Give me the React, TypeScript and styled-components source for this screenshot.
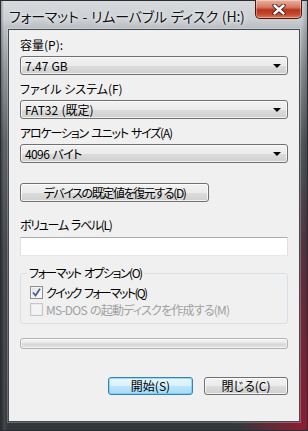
import React from "react";
import styled, { createGlobalStyle } from "styled-components";

const Global = createGlobalStyle`
  html, body { margin: 0; padding: 0; background: #2b2f33; }
  body { font-family: "Noto Sans CJK JP", "Liberation Sans", sans-serif; }
  * { box-sizing: border-box; }
`;

const FONT = `"Noto Sans CJK JP", "Liberation Sans", sans-serif`;

const Window = styled.div`
  width: 308px;
  height: 431px;
  display: flex;
  flex-direction: column;
  padding: 0 7px 8px 7px;
  border: 1px solid #2a2d31;
  background:
    radial-gradient(ellipse 70px 260px at 100% 100%, rgba(160, 24, 48, 0.85), rgba(160, 24, 48, 0) 100%),
    linear-gradient(90deg, rgba(0,0,0,0.25) 0px, rgba(255,255,255,0.08) 3px, rgba(0,0,0,0) 7px, rgba(0,0,0,0) 300px, rgba(0,0,0,0.25) 308px),
    linear-gradient(180deg, #d7dadd 0px, #cbcfd3 18px, #b4b9be 30px, #8a8f94 70px, #555a5f 140px, #3c4045 250px, #33373b 431px);
`;

const TitleBar = styled.div`
  height: 28px;
  display: flex;
  align-items: flex-start;
  justify-content: space-between;
  margin-right: -2px;
`;

const TitleText = styled.div`
  font-family: ${FONT};
  font-feature-settings: "palt";
  font-size: 14px;
  letter-spacing: -0.2px;
  word-spacing: 1px;
  line-height: 16px;
  padding: 7px 0 0 1px;
  color: #111;
  text-shadow: 0 0 6px rgba(255,255,255,0.95), 0 0 2px rgba(255,255,255,0.9);
  white-space: nowrap;
`;

const CloseButton = styled.div`
  width: 47px;
  height: 19px;
  margin-top: -1px;
  border: 1px solid #4a1810;
  border-top: none;
  border-radius: 0 0 5px 5px;
  background: linear-gradient(180deg, #e9b2a2 0%, #d77a61 40%, #b9331c 55%, #c44a2c 80%, #e07a55 100%);
  box-shadow: inset 0 0 0 1px rgba(255,255,255,0.35);
  display: flex;
  align-items: center;
  justify-content: center;
`;

const Client = styled.div`
  flex: 1;
  background: #f0f0f0;
  border: 1px solid #454a4f;
  box-shadow: 0 0 0 1px rgba(255,255,255,0.25);
  padding: 7px 11px 0 11px;
  display: flex;
  flex-direction: column;
  font-family: ${FONT};
  font-feature-settings: "palt";
  font-size: 12px;
  color: #000;
`;

const Text = styled.span<{ $ls?: number }>`
  letter-spacing: ${(p) => p.$ls ?? 0}px;
  word-spacing: ${(p) => -(p.$ls ?? 0) + 0.5}px;
  white-space: nowrap;
`;

const Label = styled.div<{ $mt: number }>`
  margin-top: ${(p) => p.$mt}px;
  line-height: 16px;
  height: 16px;
  white-space: nowrap;
`;

const Combo = styled.div`
  margin-top: 3px;
  height: 19px;
  border: 1px solid #707070;
  border-radius: 3px;
  background: linear-gradient(180deg, #f2f2f2 0%, #ebebeb 50%, #dddddd 51%, #cfcfcf 100%);
  box-shadow: inset 0 0 0 1px rgba(255,255,255,0.7);
  display: flex;
  align-items: center;
  justify-content: space-between;
  padding: 0 4px 0 4px;
  line-height: 17px;
`;

const Arrow = styled.span`
  width: 0;
  height: 0;
  border-left: 4px solid transparent;
  border-right: 4px solid transparent;
  border-top: 4px solid #000;
  margin-right: 2px;
  margin-top: 1px;
`;

const Button = styled.div<{ $w: number; $h: number; $default?: boolean }>`
  width: ${(p) => p.$w}px;
  height: ${(p) => p.$h}px;
  border: 1px solid ${(p) => (p.$default ? "#3c7fb1" : "#707070")};
  border-radius: 3px;
  background: ${(p) =>
    p.$default
      ? "linear-gradient(180deg, #eaf6fd 0%, #d9f0fc 50%, #bee6fd 51%, #a7d9f5 100%)"
      : "linear-gradient(180deg, #f2f2f2 0%, #ebebeb 50%, #dddddd 51%, #cfcfcf 100%)"};
  box-shadow: inset 0 0 0 1px ${(p) => (p.$default ? "rgba(72,208,255,0.6)" : "rgba(255,255,255,0.75)")};
  display: flex;
  align-items: center;
  justify-content: center;
  line-height: 16px;
  white-space: nowrap;
`;

const RestoreRow = styled.div`
  margin-top: 20px;
  display: flex;
`;

const TextBox = styled.div`
  margin-top: 4px;
  height: 19px;
  background: #fff;
  border: 1px solid #e3e9ef;
  border-top-color: #abadb3;
  border-left-color: #dbdfe6;
  border-right-color: #dbdfe6;
`;

const Group = styled.fieldset`
  margin: 10px 0 0 0;
  min-width: 0;
  border: 1px solid #d5dfe5;
  border-radius: 3px;
  padding: 0 8px 5px 9px;
  display: flex;
  flex-direction: column;
`;

const Legend = styled.legend`
  padding: 0 2px;
  margin-left: -3px;
  line-height: 14px;
  font-size: 12px;
  white-space: nowrap;
`;

const CheckRow = styled.div<{ $disabled?: boolean; $first?: boolean }>`
  height: 17px;
  margin-top: ${(p) => (p.$first ? 4 : 0)}px;
  display: flex;
  align-items: center;
  gap: 3px;
  color: ${(p) => (p.$disabled ? "#a0a0a0" : "#000")};
  white-space: nowrap;
`;

const Box = styled.span<{ $disabled?: boolean }>`
  width: 13px;
  height: 13px;
  flex: none;
  border: 1px solid ${(p) => (p.$disabled ? "#c6c6c6" : "#8e8f8f")};
  background: ${(p) =>
    p.$disabled
      ? "#f4f4f4"
      : "linear-gradient(135deg, #dcdcdc 0%, #f6f6f6 60%, #ffffff 100%)"};
  box-shadow: inset 0 0 0 1px ${(p) => (p.$disabled ? "#ececec" : "#f4f4f4")};
  display: flex;
  align-items: center;
  justify-content: center;
`;

const Progress = styled.div`
  margin-top: 14px;
  height: 11px;
  border: 1px solid #b2b2b2;
  border-radius: 3px;
  background: linear-gradient(180deg, #f6f6f6 0%, #e6e6e6 45%, #d6d6d6 55%, #e4e4e4 100%);
  box-shadow: inset 0 0 0 1px rgba(255,255,255,0.6);
`;

const ButtonRow = styled.div`
  margin-top: 28px;
  display: flex;
  justify-content: flex-end;
  gap: 11px;
`;

export default function App() {
  return (
    <>
      <Global />
      <Window>
        <TitleBar>
          <TitleText>フォーマット - リムーバブル ディスク (H:)</TitleText>
          <CloseButton>
            <svg width="14" height="11" viewBox="0 0 14 11">
              <path d="M2.5 1.5 L11.5 9.5 M11.5 1.5 L2.5 9.5" stroke="#3a1a14" strokeWidth="4.2" strokeLinecap="round" />
              <path d="M2.5 1.5 L11.5 9.5 M11.5 1.5 L2.5 9.5" stroke="#ffffff" strokeWidth="2.4" strokeLinecap="round" />
            </svg>
          </CloseButton>
        </TitleBar>
        <Client>
          <Label $mt={0}>容量(P):</Label>
          <Combo>
            <Text>7.47 GB</Text>
            <Arrow />
          </Combo>
          <Label $mt={6}>ファイル システム(F)</Label>
          <Combo>
            <Text>FAT32 (既定)</Text>
            <Arrow />
          </Combo>
          <Label $mt={6}>
            <Text $ls={-1.2}>アロケーション ユニット サイズ(A)</Text>
          </Label>
          <Combo>
            <Text $ls={-0.6}>4096 バイト</Text>
            <Arrow />
          </Combo>
          <RestoreRow>
            <Button $w={189} $h={19}>
              <Text $ls={-1.4}>デバイスの既定値を復元する(D)</Text>
            </Button>
          </RestoreRow>
          <Label $mt={15}>
            <Text $ls={-1.3}>ボリューム ラベル(L)</Text>
          </Label>
          <TextBox />
          <Group>
            <Legend>
              <Text $ls={-1.5}>フォーマット オプション(O)</Text>
            </Legend>
            <CheckRow $first>
              <Box>
                <svg width="9" height="9" viewBox="0 0 9 9">
                  <path d="M1 4.5 L3.5 7.5 L8 0.8" fill="none" stroke="#4a5f97" strokeWidth="1.8" />
                </svg>
              </Box>
              <Text $ls={-1.7}>クイック フォーマット(Q)</Text>
            </CheckRow>
            <CheckRow $disabled>
              <Box $disabled />
              <Text $ls={-0.8}>MS-DOS の起動ディスクを作成する(M)</Text>
            </CheckRow>
          </Group>
          <Progress />
          <ButtonRow>
            <Button $w={85} $h={18} $default>開始(S)</Button>
            <Button $w={84} $h={18}>閉じる(C)</Button>
          </ButtonRow>
        </Client>
      </Window>
    </>
  );
}
